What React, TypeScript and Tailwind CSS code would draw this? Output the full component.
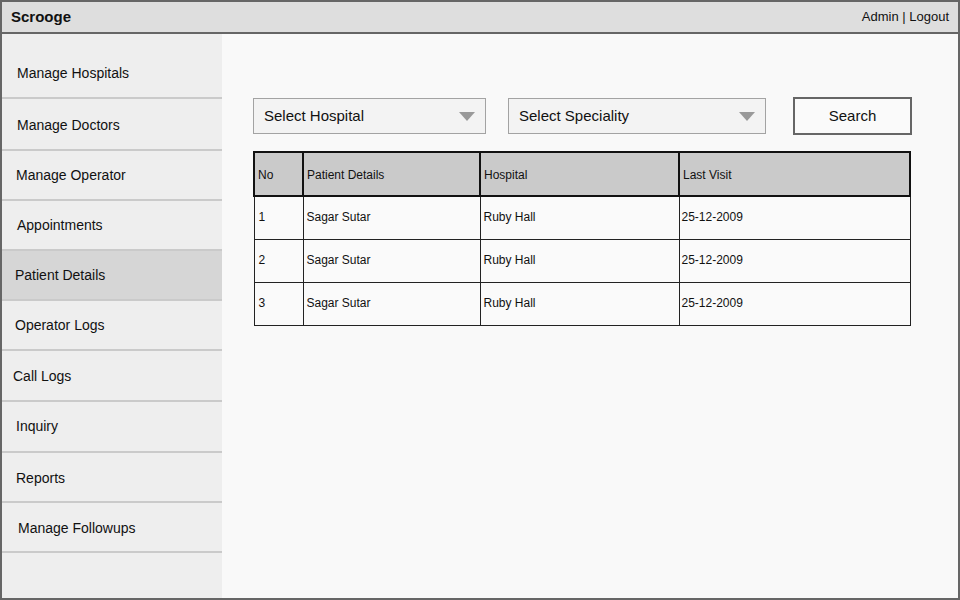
const menu = [
  { label: 'Manage Hospitals', h: 'h-[65px] pt-[15px]', pl: 'pl-[15px]' },
  { label: 'Manage Doctors', h: 'h-[52px] pt-[2px]', pl: 'pl-[15px]' },
  { label: 'Manage Operator', h: 'h-[50px] pt-[1px]', pl: 'pl-[14px]' },
  { label: 'Appointments', h: 'h-[50px]', pl: 'pl-[15px]' },
  { label: 'Patient Details', h: 'h-[50px] pt-[1px]', pl: 'pl-[13px]', active: true },
  { label: 'Operator Logs', h: 'h-[50px] pt-[1px]', pl: 'pl-[13px]' },
  { label: 'Call Logs', h: 'h-[51px] pt-[2px]', pl: 'pl-[11px]' },
  { label: 'Inquiry', h: 'h-[51px]', pl: 'pl-[14px]' },
  { label: 'Reports', h: 'h-[50px] pt-[3px]', pl: 'pl-[14px]' },
  { label: 'Manage Followups', h: 'h-[50px] pt-[3px]', pl: 'pl-[16px]' },
];

const rows = [
  { no: '1', name: 'Sagar Sutar', hospital: 'Ruby Hall', visit: '25-12-2009' },
  { no: '2', name: 'Sagar Sutar', hospital: 'Ruby Hall', visit: '25-12-2009' },
  { no: '3', name: 'Sagar Sutar', hospital: 'Ruby Hall', visit: '25-12-2009' },
];

function Select({ label, width }: { label: string; width: string }) {
  return (
    <div
      className={`${width} h-[36px] flex items-center justify-between pl-[10px] pr-[10px] pt-[1px] bg-[#f3f3f3] border border-[#a3a3a3] text-[15px] text-[#111]`}
    >
      <span>{label}</span>
      <svg width="16" height="9" viewBox="0 0 16 9">
        <polygon points="0,0 16,0 8,9" fill="#999" />
      </svg>
    </div>
  );
}

export default function App() {
  return (
    <div className="w-[960px] h-[600px] flex flex-col border-2 border-[#666] bg-[#f9f9f9] font-['Liberation_Sans',Arial,sans-serif] text-[#111] overflow-hidden">
      <header className="h-[32px] shrink-0 flex items-center justify-between px-[9px] bg-[#dedede] border-b-2 border-[#666]">
        <span className="text-[15px] font-bold">Scrooge</span>
        <span className="text-[13px]">Admin | Logout</span>
      </header>

      <div className="flex flex-1 min-h-0">
        <nav className="w-[220px] shrink-0 bg-[#eeeeee] flex flex-col">
          {menu.map((m) => (
            <div
              key={m.label}
              className={`${m.h} ${m.pl} shrink-0 flex items-center border-b-2 border-[#cacaca] text-[14px] ${
                m.active ? 'bg-[#d6d6d6]' : ''
              }`}
            >
              {m.label}
            </div>
          ))}
        </nav>

        <main className="flex-1 pt-[63px] pl-[31px]">
          <div className="flex items-center">
            <Select label="Select Hospital" width="w-[233px]" />
            <div className="w-[22px]" />
            <Select label="Select Speciality" width="w-[258px]" />
            <div className="w-[27px]" />
            <button className="w-[119px] h-[38px] bg-[#fafafa] border-2 border-[#666] text-[15px]">
              Search
            </button>
          </div>

          <table className="mt-[16px] w-[656px] border-collapse text-[12px] table-fixed">
            <colgroup>
              <col className="w-[49px]" />
              <col className="w-[177px]" />
              <col className="w-[199px]" />
              <col className="w-[231px]" />
            </colgroup>
            <thead>
              <tr className="h-[44px] bg-[#cacaca]">
                {['No', 'Patient Details', 'Hospital', 'Last Visit'].map((h) => (
                  <th
                    key={h}
                    className="text-left font-normal border-2 border-[#111] px-[3px] pt-[2px]"
                  >
                    {h}
                  </th>
                ))}
              </tr>
            </thead>
            <tbody className="bg-[#fafafa]">
              {rows.map((r) => (
                <tr key={r.no} className="h-[43px]">
                  <td className="border border-[#222] px-[4px] pb-[2px]">{r.no}</td>
                  <td className="border border-[#222] px-[3px] pb-[2px]">{r.name}</td>
                  <td className="border border-[#222] px-[3px] pb-[2px]">{r.hospital}</td>
                  <td className="border border-[#222] px-[2px] pb-[2px]">{r.visit}</td>
                </tr>
              ))}
            </tbody>
          </table>
        </main>
      </div>
    </div>
  );
}
